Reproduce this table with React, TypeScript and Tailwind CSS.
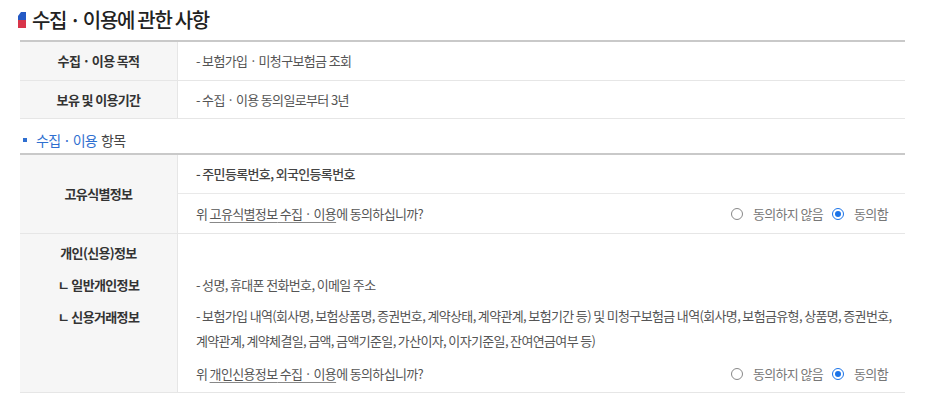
import React from 'react';

const font = { fontFamily: '"Noto Sans CJK KR", "Noto Sans", sans-serif' };

const Radio = ({ checked }: { checked?: boolean }) =>
  checked ? (
    <span className="inline-block w-[12px] h-[12px] rounded-full border border-[#1a73e8] p-[2px] bg-white">
      <span className="block w-full h-full rounded-full bg-[#1a73e8]" />
    </span>
  ) : (
    <span className="inline-block w-[12px] h-[12px] rounded-full border border-[#888] bg-white" />
  );

const Consent = ({ subject }: { subject: string }) => (
  <div className="flex items-center justify-between mr-[7px]">
    <span>
      위 <span className="underline underline-offset-[3px] decoration-[#888]">{subject} 수집 · 이용</span>에 동의하십니까?
    </span>
    <div className="flex items-center text-[#777]">
      <Radio />
      <span className="ml-[10px] mr-[9px]">동의하지 않음</span>
      <Radio checked />
      <span className="ml-[10px]">동의함</span>
    </div>
  </div>
);

const App: React.FC = () => {
  return (
    <div className="w-[946px] h-[417px] bg-white text-[13px] tracking-[-0.05em] text-[#555]" style={font}>
      <div className="ml-[20px] w-[885px]">
        {/* Title */}
        <div className="h-[40px] flex items-center -ml-[2px]">
          <svg width="8" height="16" viewBox="0 0 8 16" className="mr-[6px]">
            <path d="M3 0 H8 V8 H0 V4 Z" fill="#2459c4" />
            <path d="M0 8 H8 V16 H0 Z" fill="#d8354a" />
          </svg>
          <h2 className="text-[20px] tracking-[-0.065em] text-[#222] font-medium">수집 · 이용에 관한 사항</h2>
        </div>

        {/* Table 1 */}
        <div className="border-t-2 border-[#c9c9c9]">
          <div className="grid grid-cols-[158px_1fr] border-b border-[#e6e6e6]">
            <div className="h-[38px] flex items-center justify-center bg-[#f6f6f6] border-r border-[#e6e6e6] text-[#333] font-bold">
              수집 · 이용 목적
            </div>
            <div className="flex items-center px-[18px]">- 보험가입 · 미청구보험금 조회</div>
          </div>
          <div className="grid grid-cols-[158px_1fr] border-b border-[#e6e6e6]">
            <div className="h-[37px] flex items-center justify-center bg-[#f6f6f6] border-r border-[#e6e6e6] text-[#333] font-bold">
              보유 및 이용기간
            </div>
            <div className="flex items-center px-[18px]">- 수집 · 이용 동의일로부터 3년</div>
          </div>
        </div>

        {/* Subtitle */}
        <div className="h-[34px] flex items-center pt-[8px] text-[14px]">
          <span className="w-[4px] h-[4px] bg-[#2f6fd0] ml-[3px] mr-[9px]" />
          <span className="text-[#2f6fd0]">수집 · 이용</span>
          <span className="ml-[4px] text-[#444]">항목</span>
        </div>

        {/* Table 2 */}
        <div className="border-t-2 border-[#c9c9c9]">
          <div className="grid grid-cols-[158px_1fr] border-b border-[#e6e6e6]">
            <div className="flex items-center justify-center bg-[#f6f6f6] border-r border-[#e6e6e6] text-[#333] font-bold">
              고유식별정보
            </div>
            <div className="flex flex-col">
              <div className="h-[39px] flex items-center px-[18px] border-b border-[#e9e9e9] text-[#444] font-medium">
                - 주민등록번호, 외국인등록번호
              </div>
              <div className="h-[39px] flex flex-col justify-center pl-[18px] pr-[10px]">
                <Consent subject="고유식별정보" />
              </div>
            </div>
          </div>

          <div className="grid grid-cols-[158px_1fr] border-b border-[#e6e6e6]">
            <div className="flex flex-col items-center gap-[7px] pt-[6px] bg-[#f6f6f6] border-r border-[#e6e6e6] text-[#333] font-bold leading-[25px]">
              <div>개인(신용)정보</div>
              <div>ㄴ 일반개인정보</div>
              <div>ㄴ 신용거래정보</div>
            </div>
            <div className="flex flex-col pt-[38px] pb-[6px] pl-[18px] pr-[10px] leading-[25px]">
              <div>- 성명, 휴대폰 전화번호, 이메일 주소</div>
              <div className="mt-[6px]">
                - 보험가입 내역(회사명, 보험상품명, 증권번호, 계약상태, 계약관계, 보험기간 등) 및 미청구보험금 내역(회사명, 보험금유형, 상품명, 증권번호, 계약관계, 계약체결일, 금액, 금액기준일, 가산이자, 이자기준일, 잔여연금여부 등)
              </div>
              <div className="mt-[8px]">
                <Consent subject="개인신용정보" />
              </div>
            </div>
          </div>
        </div>
      </div>
    </div>
  );
};

export default App;
